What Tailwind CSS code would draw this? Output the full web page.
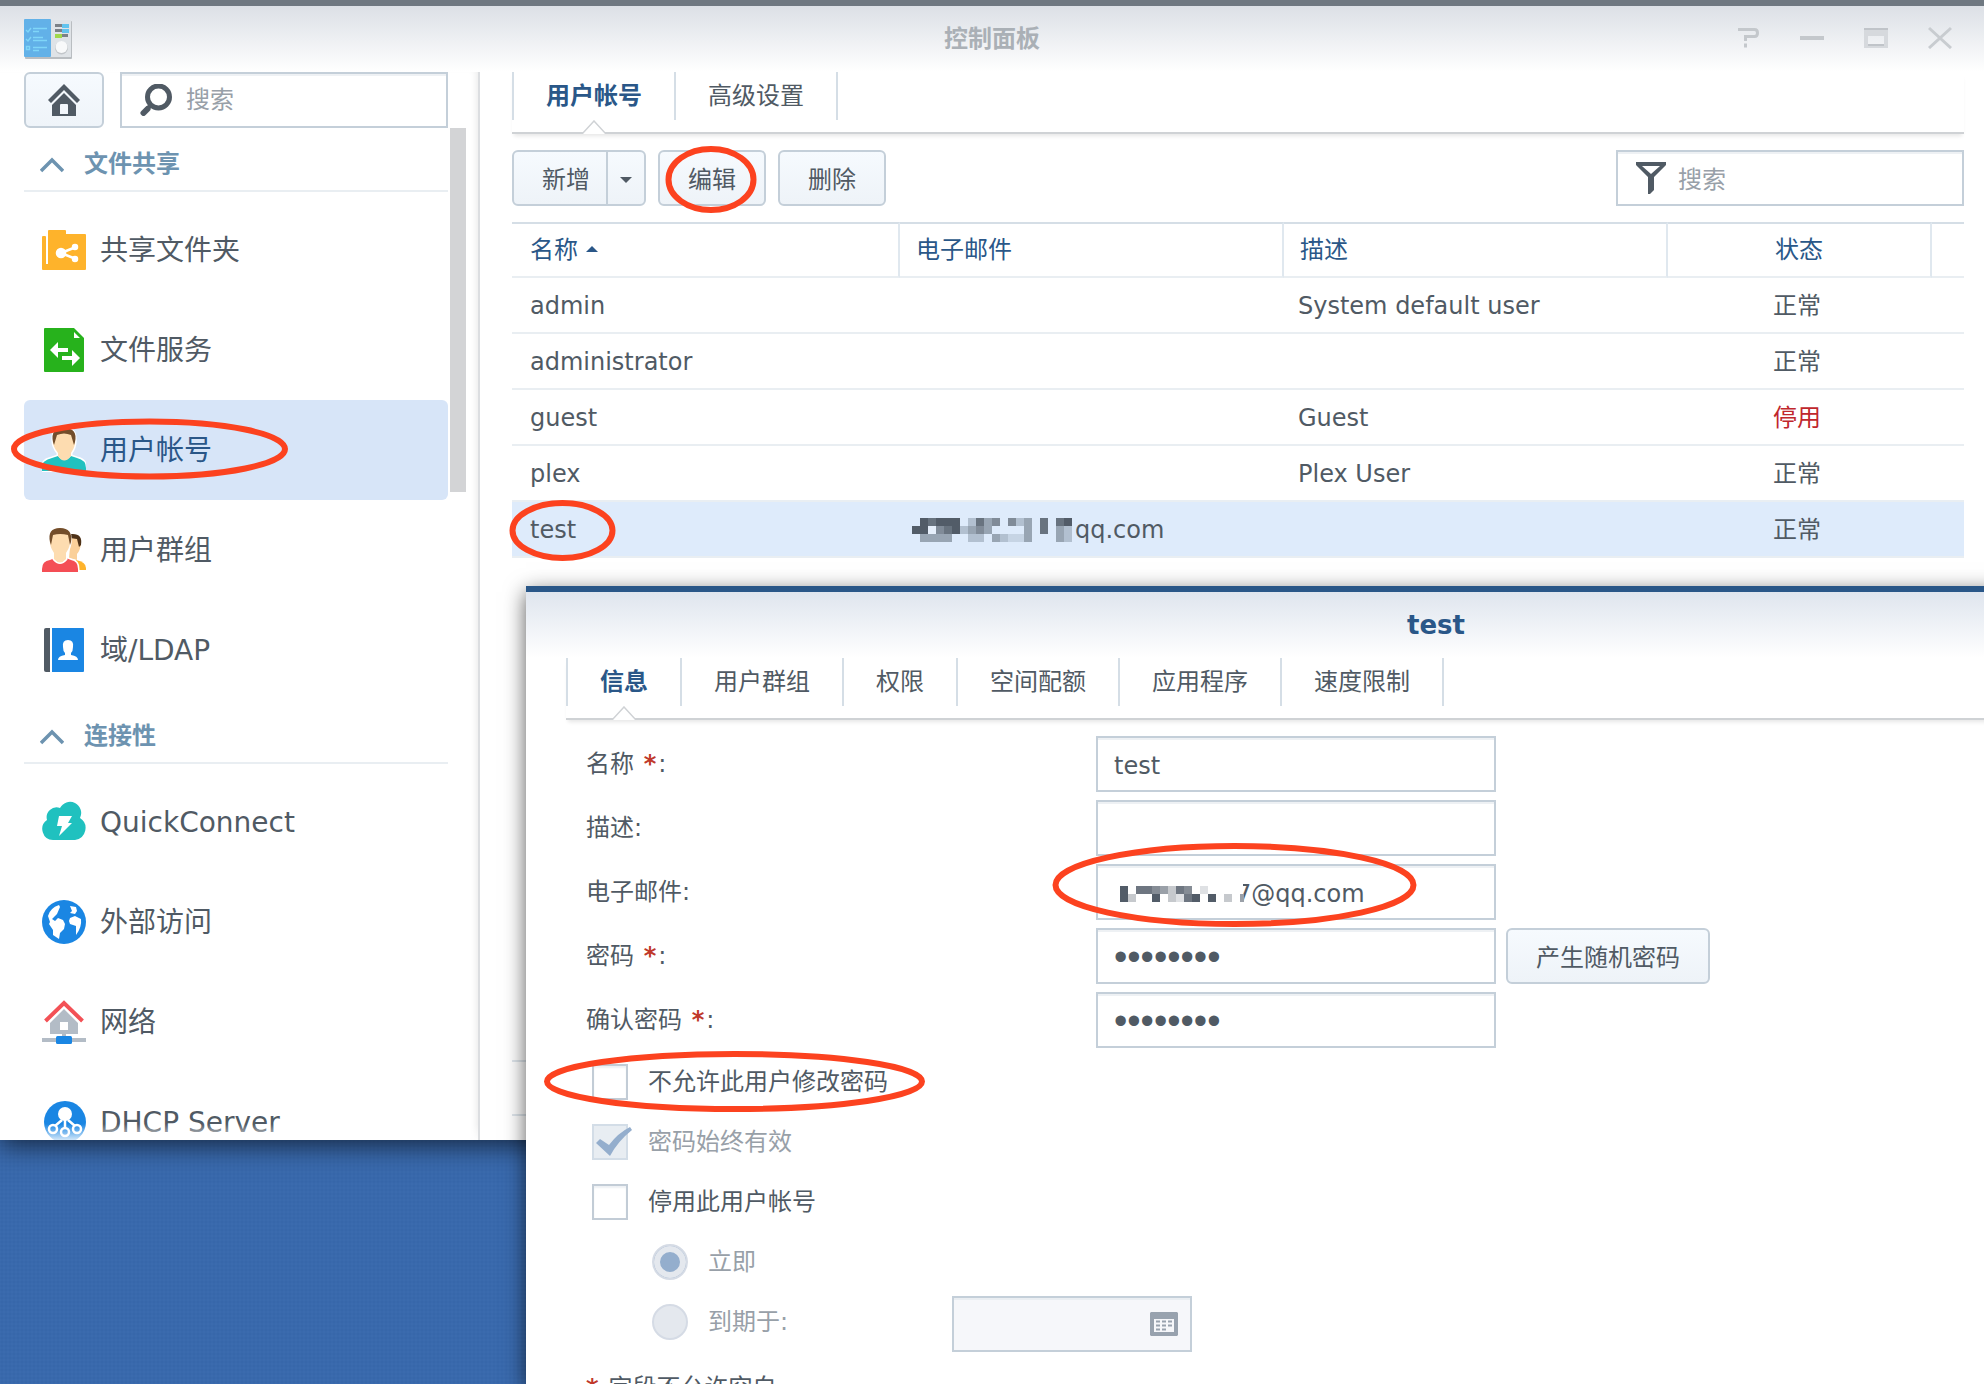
<!DOCTYPE html>
<html lang="zh-CN">
<head>
  <meta charset="UTF-8" />
  <meta name="viewport" content="width=device-width, initial-scale=1.0" />
  <title>控制面板</title>
  <script src="https://cdn.jsdelivr.net/npm/@tailwindcss/browser@4"></script>
</head>
<body class="relative h-screen overflow-hidden bg-[#3b6bae] bg-[radial-gradient(#3767aa_1px,transparent_2px)] bg-size-[4px_4px] font-['DejaVu_Sans','Noto_Sans_CJK_SC',sans-serif] text-2xl/8 text-[#505a64]">

  <!-- Control panel window -->
  <div class="flex h-[calc(100vh-244px)] flex-col border-t-6 border-[#6f7881] bg-white shadow-[0_6px_24px_rgba(0,0,0,0.6)]">
    <header class="relative flex h-[66px] shrink-0 items-center justify-between bg-linear-to-b from-[#dce0e6] to-white px-6">
      <svg class="h-10 w-12" viewBox="0 0 48 40">
        <rect x="1" y="2" width="47" height="38" rx="1" fill="#b9bdc1"/>
        <rect x="26" y="1" width="21" height="37" fill="#dfe3e7"/>
        <rect x="0" y="0" width="27" height="38" rx="1" fill="#62b1e8"/>
        <g fill="none" stroke="#7fd6f8" stroke-width="1.4">
          <path d="M2 11l2 2 3-4M2 20l2 2 3-4M2.500 27.500h3v3h-3zM9 9.500h14M9 12.500h6M9 18.500h10M9 21.500h14M9 28.500h14M9 31.500h6"/>
        </g>
        <path d="M31 6.500h10M31 11.500h10M36 16.500h8" stroke="#7b8187" stroke-width="3"/>
        <path d="M38 7h7M38 12h7" stroke="#62c4ee" stroke-width="4"/>
        <path d="M31 17h7" stroke="#a0d84c" stroke-width="4"/>
        <circle cx="37.500" cy="29" r="6.500" fill="#c2c6ca"/>
        <circle cx="37.500" cy="28" r="6" fill="#f8f9fa"/>
      </svg>
      <h1 class="absolute inset-x-0 text-center font-bold text-[#aab0b6]">控制面板</h1>
      <div class="relative flex gap-10 pr-2 pb-1">
        <button aria-label="帮助"><svg class="size-6" viewBox="0 0 24 24" fill="none" stroke="#c4c8cc" stroke-width="3"><path d="M2 4.500h16.500q3 0 3 3.500t-3 3.500H9.500v4.500M9.500 18.500v4"/></svg></button>
        <button aria-label="最小化"><svg class="size-6" viewBox="0 0 24 24" stroke="#c4c8cc" stroke-width="4"><path d="M0 13h24"/></svg></button>
        <button aria-label="最大化"><svg class="size-6" viewBox="0 0 24 24"><path d="M0 3h24v20H0zM4 11v9h16v-9z" fill="#d6d9dd" fill-rule="evenodd"/><path d="M0 3h24v2H0zM4 19h16v2H4z" fill="#c0c4c9"/></svg></button>
        <button aria-label="关闭"><svg class="size-6" viewBox="0 0 24 24" stroke="#c8ccd0" stroke-width="3"><path d="M1 3l22 20M23 3L1 23"/></svg></button>
      </div>
    </header>

    <div class="flex min-h-0 flex-1">
      <!-- Sidebar -->
      <aside class="relative flex w-[480px] shrink-0 flex-col overflow-hidden border-r-2 border-[#dcdee1] pr-[30px] pl-6 shadow-[inset_-6px_0_6px_-4px_rgba(0,0,0,0.08)]">
        <div class="flex shrink-0 gap-4">
          <button aria-label="主页" class="flex h-14 w-20 items-center justify-center rounded-md border-2 border-[#c4cfd9] bg-linear-to-b from-[#f6fafe] to-[#eff4f9]">
            <svg class="size-8" viewBox="0 0 32 32"><path d="M16 0l16 16-3 3L16 6 3 19l-3-3z" fill="#505a64"/><path d="M16 9l12 12v11H4V21z" fill="#505a64"/><path d="M12 30V21q0-1 1-1h6q1 0 1 1v9z" fill="#f2f6fb"/></svg>
          </button>
          <label class="flex h-14 flex-1 items-center gap-3.5 border-2 border-[#c4cfd9] bg-white px-4.5 shadow-[inset_0_2px_0_#eef1f4]">
            <svg class="size-8 shrink-0" viewBox="0 0 32 32" fill="none" stroke="#505a64"><circle cx="18.500" cy="13" r="11" stroke-width="5"/><path d="M11 21l-6 6" stroke-width="4"/><path d="M7.500 25l-4 4" stroke-width="6" stroke-linecap="round"/></svg>
            <input type="text" aria-label="搜索" placeholder="搜索" class="h-8 w-full min-w-0 outline-none placeholder:text-[#98a0a8]" />
          </label>
        </div>

        <nav class="min-h-0 flex-1 overflow-hidden">
          <h2 class="flex h-16 items-center gap-5 border-b-2 border-[#e9eef2] pt-2 pl-4 font-bold text-[#6d93b0]">
            <svg class="h-6 w-6" viewBox="0 0 24 24" fill="none" stroke="#6d93b0" stroke-width="3.500"><path d="M1 20L12 9l11 11"/></svg>
            <span class="pt-0.5">文件共享</span>
          </h2>
          <ul class="mt-2 text-[28px]/9">
            <li><a href="#" class="flex h-25 items-center gap-3.5 rounded-md pl-4.5">
              <svg class="size-11" viewBox="0 0 44 44"><path d="M6 3q0-1 1-1h16q1 0 1 1v3h19q1 0 1 1v34q0 1-1 1H1q-1 0-1-1V9q0-1 1-1h2q1 0 1 1v27h2z" fill="#feb32b"/><g stroke="#fff" stroke-width="2.500" fill="#fff"><path d="M19 25l15-6M19 25l15 6"/><circle cx="19" cy="25" r="4"/><circle cx="33" cy="19" r="2"/><circle cx="33" cy="31" r="2"/></g></svg>
              <span class="pt-0.5">共享文件夹</span></a></li>
            <li><a href="#" class="flex h-25 items-center gap-3.5 rounded-md pl-4.5">
              <svg class="size-11" viewBox="0 0 44 44"><path d="M3 0h29l10 10v33q0 1-1 1H3q-1 0-1-1V1q0-1 1-1z" fill="#27b21c"/><path d="M32 4v6h6zM8 22l8-8v6h10v4H16v6zM38 30l-8-8v6H20v4h10v6z" fill="#fff"/></svg>
              <span class="pt-0.5">文件服务</span></a></li>
            <li><a href="#" class="flex h-25 items-center gap-3.5 rounded-md bg-[#d7e5f8] pl-4.5 text-[#2a5788]">
              <svg class="size-11" viewBox="0 0 44 44"><g stroke="#fff" stroke-width="3" stroke-linejoin="round"><path d="M0 43v-3q0-8 10-10l6-2q6 8 13 0l6 2q9 2 9 10v3z" fill="#20c1bf"/><path d="M11 10Q11 0 22 0t11 10q1 8-4 15v3q-7 9-13 0v-3Q10 18 11 10z" fill="#fddcb0"/></g><path d="M0 43v-3q0-8 10-10l6-2q6 8 13 0l6 2q9 2 9 10v3z" fill="#20c1bf"/><path d="M11 10Q11 0 22 0t11 10q1 8-4 15v3q-7 9-13 0v-3Q10 18 11 10z" fill="#fddcb0"/><path d="M11 14Q8 0 22 0t11 14l-1 3-3-10q-7-3-14 0l-3 10z" fill="#724d2b"/></svg>
              <span class="pt-0.5">用户帐号</span></a></li>
            <li><a href="#" class="flex h-25 items-center gap-3.5 rounded-md pl-4.5">
              <svg class="size-11" viewBox="0 0 44 44"><path d="M34 32q10 2 10 8v2h-8z" fill="#feb32b"/><path d="M29 8q10-1 10 8-1 7-4 10v6l-8-2z" fill="#fad09a"/><path d="M29 6q12-1 10 11l-2 2-2-8-7-1z" fill="#4e3218"/><path d="M0 44v-3q0-8 8-9l5-2q5 8 11 0l5 2q7 1 7 9v3z" fill="#f44e55" stroke="#fff" stroke-width="3" paint-order="stroke"/><path d="M8 10Q8 0 18 0t10 10q1 8-4 15v6q-6 7-12 0v-6Q7 18 8 10z" fill="#fddcb0" stroke="#fff" stroke-width="3" paint-order="stroke"/><path d="M8 14Q5 0 18 0t11 14l-1 3-2-10q-8-2-15 0L9 17z" fill="#724d2b"/></svg>
              <span class="pt-0.5">用户群组</span></a></li>
            <li><a href="#" class="flex h-25 items-center gap-3.5 rounded-md pl-4.5">
              <svg class="size-11" viewBox="0 0 44 44"><path d="M8 0H4Q2 0 2 2v40q0 2 2 2h4z" fill="#505a64"/><path d="M10 0h31q1 0 1 1v42q0 1-1 1H10z" fill="#1a86e3"/><path d="M26 12q6 0 5 7 0 4-2 6v2q7 1 7 5H16q0-4 7-5v-2q-2-2-2-6-1-7 5-7z" fill="#fff"/></svg>
              <span class="pt-0.5">域/LDAP</span></a></li>
          </ul>
          <h2 class="flex h-16 items-center gap-5 border-b-2 border-[#e9eef2] pt-2 pl-4 font-bold text-[#6d93b0]">
            <svg class="h-6 w-6" viewBox="0 0 24 24" fill="none" stroke="#6d93b0" stroke-width="3.500"><path d="M1 20L12 9l11 11"/></svg>
            <span class="pt-0.5">连接性</span>
          </h2>
          <ul class="mt-2 text-[28px]/9">
            <li><a href="#" class="flex h-25 items-center gap-3.5 rounded-md pl-4.5">
              <svg class="size-11" viewBox="0 0 44 44"><path d="M11 40a11 11 0 0 1-6-20 10 10 0 0 1 13-12 11 11 0 0 1 20 10 12 12 0 0 1-5 22z" fill="#20c1bf"/><path d="M17 16h13l-4 7h4L17 36l3-10h-5z" fill="#fff"/></svg>
              <span class="pt-0.5">QuickConnect</span></a></li>
            <li><a href="#" class="flex h-25 items-center gap-3.5 rounded-md pl-4.5">
              <svg class="size-11" viewBox="0 0 44 44"><circle cx="22" cy="22" r="22" fill="#1a86e3"/><path d="M17 5l1 2-3 7-5 5 3 2 3-3 5 2 2 4-1 5-4 4-1 6-6-4v-5l-4-6 1-2-2-6q2-8 11-11zM28 6l6 1 1 4-2 3-5-1 2-2zM28 18l5-2 6 3q1 8-5 16v-9l-6-2-1-3z" fill="#fff"/></svg>
              <span class="pt-0.5">外部访问</span></a></li>
            <li><a href="#" class="flex h-25 items-center gap-3.5 rounded-md pl-4.5">
              <svg class="size-11" viewBox="0 0 44 44"><path d="M22 9l14 14v11H8V23zM18 22v8h8v-8zM0 38h44v4H0zM20 34h4v4h-4z" fill="#b3bcc6" fill-rule="evenodd"/><path d="M3.500 21L22 3l18.500 18" fill="none" stroke="#f35156" stroke-width="4"/><rect x="14" y="36" width="16" height="8" rx="1.500" fill="#1a86e3"/></svg>
              <span class="pt-0.5">网络</span></a></li>
            <li><a href="#" class="flex h-25 items-center gap-3.5 rounded-md pl-4.5">
              <svg class="size-11" viewBox="0 0 44 44"><circle cx="23" cy="22" r="21" fill="#1a86e3"/><circle cx="23" cy="14" r="7" fill="#fff"/><g fill="none" stroke="#fff" stroke-width="2.500"><path d="M23 20v7M20 20l-7 6M26 20l7 6"/><circle cx="11" cy="29" r="4"/><circle cx="23" cy="32" r="4"/><circle cx="35" cy="29" r="4"/></g></svg>
              <span class="pt-0.5">DHCP Server</span></a></li>
          </ul>
        </nav>
        <div class="absolute top-14 right-3 h-[364px] w-4 bg-[#d3d4d6]"></div>
        <div class="absolute inset-x-0 bottom-0 h-4 bg-linear-to-b from-white/0 to-white/80"></div>
      </aside>

      <!-- User list -->
      <main class="flex min-w-0 flex-1 flex-col pr-5 pl-8">
        <div class="flex shrink-0 border-b-2 border-[#cfd2d5] pb-3 shadow-[0_4px_4px_-2px_rgba(0,0,0,0.1)]">
          <button class="relative h-12 border-l-2 border-[#d5dee6] px-8 font-bold text-[#2a5788]">用户帐号
            <svg class="absolute top-full left-1/2 -ml-3 h-3.5 w-6" viewBox="0 0 24 14"><path d="M0 14L12 1l12 13" fill="#fff" stroke="#cfd2d5" stroke-width="1.500"/></svg>
          </button>
          <button class="h-12 border-x-2 border-[#d5dee6] px-8">高级设置</button>
        </div>

        <div class="my-4 flex shrink-0 gap-3">
          <div class="flex h-14 w-[134px] rounded-md border-2 border-[#c4cfd9] bg-linear-to-b from-[#f6fafe] to-[#eef3f8]">
            <button class="flex-1 pt-1 pl-3">新增</button>
            <button aria-label="更多" class="flex w-[38px] items-center justify-center border-l-2 border-[#c4cfd9]"><svg class="mt-1 h-1.5 w-3" viewBox="0 0 12 6"><path d="M0 0h12L6 6z" fill="#505a64"/></svg></button>
          </div>
          <button class="h-14 w-[108px] rounded-md border-2 border-[#c4cfd9] bg-linear-to-b from-[#f6fafe] to-[#eef3f8] pt-1">编辑</button>
          <button class="h-14 w-[108px] rounded-md border-2 border-[#c4cfd9] bg-linear-to-b from-[#f6fafe] to-[#eef3f8] pt-1">删除</button>
          <label class="ml-auto flex h-14 w-[348px] items-center gap-3 border-2 border-[#c4cfd9] bg-white px-4.5 shadow-[inset_0_2px_0_#eef1f4]">
            <svg class="h-8 w-[30px] shrink-0" viewBox="0 0 30 32"><path d="M0 0h30v3L18 15v13l-4 4h-2V15L0 3zM6 4l9 8 9-8z" fill="#505a64" fill-rule="evenodd"/></svg>
            <input type="text" aria-label="筛选" placeholder="搜索" class="mt-1 h-8 w-full min-w-0 outline-none placeholder:text-[#98a0a8]" />
          </label>
        </div>

        <table class="w-full table-fixed border-separate border-spacing-0 text-left">
          <colgroup>
            <col class="w-[388px]" /><col class="w-[384px]" /><col class="w-[384px]" /><col class="w-[264px]" /><col />
          </colgroup>
          <thead class="text-[#2a5788]">
            <tr>
              <th class="h-14 border-y-2 border-r-2 border-t-[#d5dee6] border-r-[#e0e8ef] border-b-[#e9eef2] px-4.5 font-normal">名称<svg class="mb-1 ml-2 inline h-1.5 w-3" viewBox="0 0 12 6"><path d="M0 6h12L6 0z" fill="#2a5788"/></svg></th>
              <th class="border-y-2 border-r-2 border-t-[#d5dee6] border-r-[#e0e8ef] border-b-[#e9eef2] px-4 font-normal">电子邮件</th>
              <th class="border-y-2 border-r-2 border-t-[#d5dee6] border-r-[#e0e8ef] border-b-[#e9eef2] px-4 font-normal">描述</th>
              <th class="border-y-2 border-r-2 border-t-[#d5dee6] border-r-[#e0e8ef] border-b-[#e9eef2] text-center font-normal">状态</th>
              <th class="border-y-2 border-t-[#d5dee6] border-b-[#e9eef2]"></th>
            </tr>
          </thead>
          <tbody class="*:*:h-14 *:*:border-b-2 *:*:border-[#e9eef2] *:*:pt-0.5">
            <tr><td class="px-4.5">admin</td><td></td><td class="px-3.5">System default user</td><td class="pr-1.5 text-center">正常</td><td></td></tr>
            <tr><td class="px-4.5">administrator</td><td></td><td></td><td class="pr-1.5 text-center">正常</td><td></td></tr>
            <tr><td class="px-4.5">guest</td><td></td><td class="px-3.5">Guest</td><td class="pr-1.5 text-center text-[#c0272d]">停用</td><td></td></tr>
            <tr><td class="px-4.5">plex</td><td></td><td class="px-3.5">Plex User</td><td class="pr-1.5 text-center">正常</td><td></td></tr>
            <tr class="bg-[#deebfb]"><td class="px-4.5">test</td>
              <td class="px-3"><div class="flex items-center gap-[3px]">
                <svg class="h-6 w-40" viewBox="0 0 20 3" shape-rendering="crispEdges">
                  <path d="M1 0h1v1H1zM3 0h3v1H3zM0 1h2v1H0zM5 1h1v1H5zM19 0h1v1h-1z" fill="#525c68"/>
                  <path d="M2 0h1v1H2zM8 0h1v1H8zM4 1h1v1H4zM16 0h1v2h-1zM18 0h1v1h-1z" fill="#68737f"/>
                  <path d="M3 1h1v1H3zM10 0h1v1h-1zM12 0h1v1h-1zM8 1h1v1H8z" fill="#808b98"/>
                  <path d="M1 2h4v1H1zM9 0h1v2H9zM14 0h1v3h-1zM18 1h1v2h-1zM10 2h1v1h-1zM7 1h1v1H7z" fill="#98a5b3"/>
                  <path d="M7 0h1v1H7zM6 1h1v1H6zM7 2h2v1H7zM13 0h1v1h-1zM11 2h1v1h-1zM19 1h1v2h-1z" fill="#b2c0d0"/>
                  <path d="M12 2h2v1h-2z" fill="#c6d4e4"/>
                  <path d="M2 1h1v1H2z" fill="#e6effb"/>
                </svg>qq.com</div></td>
              <td></td><td class="pr-1.5 text-center">正常</td><td></td></tr>
          </tbody>
        </table>
        <div class="mt-auto mb-6 h-14 shrink-0 border-y-2 border-[#dfe6ec]"></div>
      </main>
    </div>
  </div>

  <!-- Edit dialog, runs past the right and bottom edges of the desktop -->
  <section class="absolute top-[586px] -right-[362px] bottom-0 left-[526px] overflow-hidden border-t-6 border-[#2a5788] bg-white shadow-[0_6px_20px_rgba(0,0,0,0.65)]">
    <header class="flex h-[66px] items-center justify-center bg-linear-to-b from-[#dfe5ee] to-white">
      <h2 class="text-[26px]/8 font-bold text-[#2a5788]">test</h2>
    </header>
    <div class="ml-10 flex border-b-2 border-[#cfd2d5] pb-3 shadow-[0_4px_4px_-2px_rgba(0,0,0,0.1)]">
      <button class="relative h-12 border-l-2 border-[#d5dee6] px-8 font-bold text-[#2a5788]">信息
        <svg class="absolute top-full left-1/2 -ml-3 h-3.5 w-6" viewBox="0 0 24 14"><path d="M0 14L12 1l12 13" fill="#fff" stroke="#cfd2d5" stroke-width="1.500"/></svg>
      </button>
      <button class="h-12 border-l-2 border-[#d5dee6] px-8">用户群组</button>
      <button class="h-12 border-l-2 border-[#d5dee6] px-8">权限</button>
      <button class="h-12 border-l-2 border-[#d5dee6] px-8">空间配额</button>
      <button class="h-12 border-l-2 border-[#d5dee6] px-8">应用程序</button>
      <button class="h-12 border-x-2 border-[#d5dee6] px-8">速度限制</button>
    </div>

    <form class="pt-4 pl-15">
      <div class="flex flex-col gap-2">
        <div class="flex h-14 items-center">
          <label for="name" class="w-[510px]">名称 <span class="mx-0.5 font-bold text-[#c0392b]">*</span>:</label>
          <input id="name" type="text" value="test" class="h-14 w-[400px] border-2 border-[#c4cfd9] px-4 pt-1 shadow-[inset_0_2px_0_#eef1f4]" />
        </div>
        <div class="flex h-14 items-center">
          <label for="desc" class="w-[510px]">描述:</label>
          <input id="desc" type="text" class="h-14 w-[400px] border-2 border-[#c4cfd9] px-4 pt-1 shadow-[inset_0_2px_0_#eef1f4]" />
        </div>
        <div class="flex h-14 items-center">
          <label for="email" class="w-[510px]">电子邮件:</label>
          <div class="relative">
            <input id="email" type="text" value="7@qq.com" class="block h-14 w-[400px] border-2 border-[#c4cfd9] pt-1 pr-4 pl-[138px] shadow-[inset_0_2px_0_#eef1f4]" />
            <div class="absolute top-4 left-6 h-6 w-[123px] bg-white">
              <svg class="mt-1.5 h-4 w-32 max-w-none" viewBox="0 0 16 2" shape-rendering="crispEdges">
                <path d="M0 0h1v2H0zM4 1h1v1H4zM9 1h1v1H9zM11 1h1v1h-1z" fill="#525c68"/>
                <path d="M2 0h2v1H2zM7 0h1v1H7zM8 1h1v1H8z" fill="#6e7681"/>
                <path d="M4 0h1v1H4zM8 0h1v1H8z" fill="#858c95"/>
                <path d="M5 0h1v1H5zM15 1h.500v1h-.500z" fill="#9aa0a8"/>
                <path d="M1 1h1v1H1zM6 0h1v2H6zM13 1h1v1h-1z" fill="#c6c9cd"/>
                <path d="M7 1h1v1H7zM10 0h1v1h-1z" fill="#dfe1e4"/>
              </svg>
            </div>
          </div>
        </div>
        <div class="flex h-14 items-center">
          <label for="password" class="w-[510px]">密码 <span class="mx-0.5 font-bold text-[#c0392b]">*</span>:</label>
          <input id="password" type="password" value="password" class="h-14 w-[400px] border-2 border-[#c4cfd9] px-4 pt-0.5 font-['Liberation_Sans',sans-serif] text-[38px]/10 shadow-[inset_0_2px_0_#eef1f4]" />
          <button type="button" class="ml-2.5 h-14 w-[204px] rounded-md border-2 border-[#c4cfd9] bg-linear-to-b from-[#f6fafe] to-[#eef3f8] pt-1">产生随机密码</button>
        </div>
        <div class="flex h-14 items-center">
          <label for="confirm" class="w-[510px]">确认密码 <span class="mx-0.5 font-bold text-[#c0392b]">*</span>:</label>
          <input id="confirm" type="password" value="password" class="h-14 w-[400px] border-2 border-[#c4cfd9] px-4 pt-0.5 font-['Liberation_Sans',sans-serif] text-[38px]/10 shadow-[inset_0_2px_0_#eef1f4]" />
        </div>
      </div>

      <div class="mt-4 flex flex-col gap-6 pl-1.5">
        <label class="flex h-9 items-center gap-5">
          <input type="checkbox" class="size-9 appearance-none border-2 border-[#c2ccd6] shadow-[inset_0_2px_2px_#eef1f4]" />不允许此用户修改密码
        </label>
        <label class="relative flex h-9 items-center gap-5 text-[#98a0a8]">
          <input type="checkbox" checked disabled class="size-9 appearance-none border-2 border-[#d3dde7] bg-[#e8edf2]" />密码始终有效
          <svg class="absolute left-1 h-9 w-9" viewBox="0 0 36 36"><path d="M0 19l4-4 9 6Q22 9 34 3l2 3Q22 17 14 32z" fill="#94aecd"/></svg>
        </label>
        <label class="flex h-9 items-center gap-5">
          <input type="checkbox" class="size-9 appearance-none border-2 border-[#c2ccd6] shadow-[inset_0_2px_2px_#eef1f4]" />停用此用户帐号
        </label>
        <label class="ml-15 flex h-9 items-center gap-5 text-[#98a0a8]">
          <input type="radio" name="when" checked disabled class="size-9 appearance-none rounded-full border-2 border-[#d5dbe5] bg-[#94aecd] shadow-[inset_0_0_0_6px_#e4e8ee]" />立即
        </label>
        <div class="ml-15 flex h-9 items-center text-[#98a0a8]">
          <label class="flex w-[300px] items-center gap-5">
            <input type="radio" name="when" disabled class="size-9 appearance-none rounded-full border-2 border-[#d5dbe5] bg-[#e4e8ee]" />到期于:
          </label>
          <div class="relative mt-1">
            <input type="text" disabled aria-label="到期于" class="block h-14 w-60 border-2 border-[#c4cfd9] bg-[#f6f7fa] px-4 shadow-[inset_0_2px_0_#eaeef2]" />
            <svg class="absolute top-4 right-3.5 h-6 w-7" viewBox="0 0 28 24"><path d="M1 0h26l1 1v22l-1 1H1l-1-1V1zM4 7v13h20V7z" fill="#98a2ae" fill-rule="evenodd"/><path d="M6 9.500h16M6 13.500h16M6 17.500h10" stroke="#98a2ae" stroke-width="2" stroke-dasharray="4 2"/></svg>
          </div>
        </div>
      </div>
      <p class="mt-8 flex gap-2.5"><span class="font-bold text-[#c0392b]">*</span>字段不允许空白</p>
    </form>
  </section>

  <!-- Red highlight marks -->
  <svg class="pointer-events-none absolute top-0 left-0 h-[1384px] w-[1984px] max-w-none" viewBox="0 0 1984 1384" fill="none" stroke="#fc421f" stroke-width="6">
    <ellipse cx="149.500" cy="449" rx="135.500" ry="27.500"/>
    <ellipse cx="711" cy="179.500" rx="42.500" ry="30.500"/>
    <ellipse cx="562.500" cy="530.500" rx="50" ry="27.500"/>
    <ellipse cx="1234.500" cy="885" rx="179" ry="39"/>
    <ellipse cx="734.500" cy="1081.500" rx="187.500" ry="27.500"/>
  </svg>
</body>
</html>
